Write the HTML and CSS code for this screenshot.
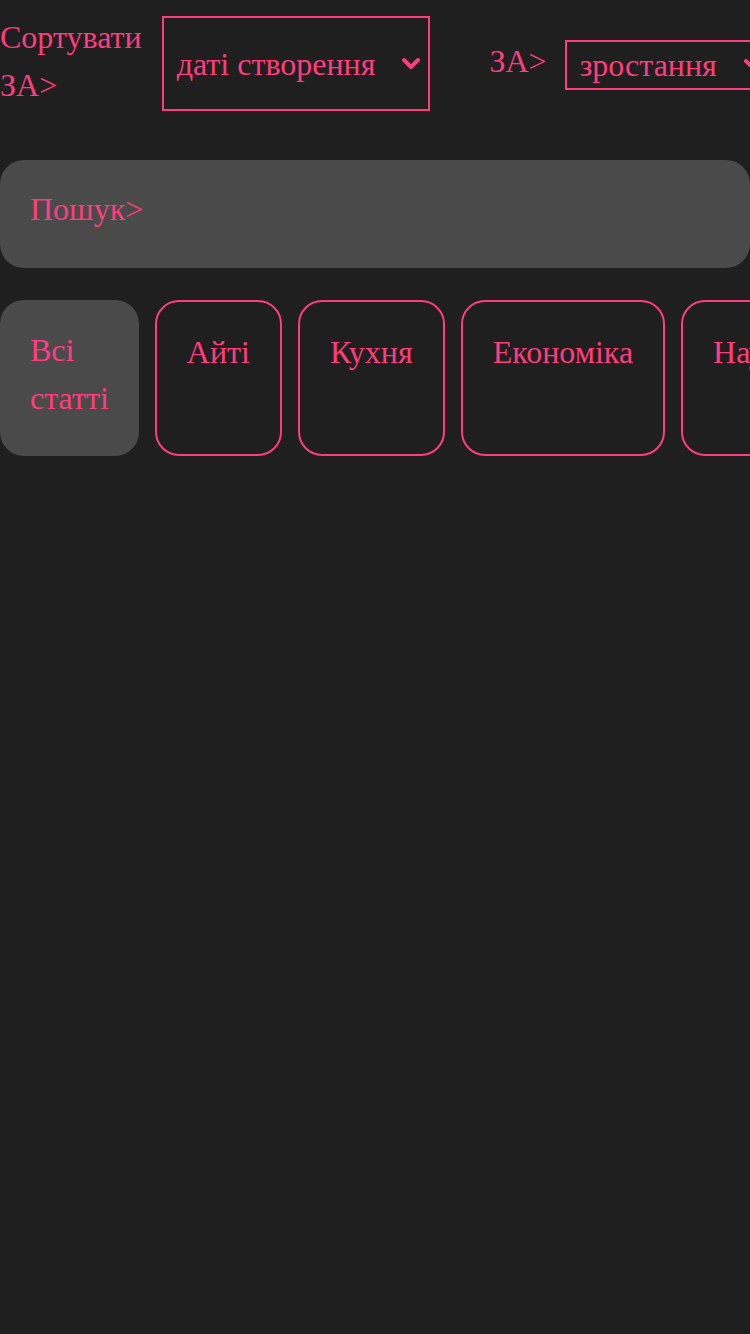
FILE: index.html
```html
<!DOCTYPE html>
<html lang="uk">
<head>
<meta charset="utf-8">
<title>Статті</title>
<link rel="stylesheet" href="styles.css">
</head>
<body>
<div class="page">
  <div class="toolbar">
    <div class="sort-group sort-group--first">
      <span class="sort-label">Сортувати ЗА&gt;</span>
      <div class="select select--tall">
        <span class="select-text">даті створення</span>
        <svg class="chevron" width="20" height="14" viewBox="0 0 20 14"><polyline points="3,3 10,10 17,3" fill="none" stroke="#ff3d7d" stroke-width="4" stroke-linecap="round" stroke-linejoin="round"/></svg>
      </div>
    </div>
    <div class="sort-group sort-group--second">
      <span class="sort-label">ЗА&gt;</span>
      <div class="select select--short">
        <span class="select-text">зростання</span>
        <svg class="chevron" width="20" height="14" viewBox="0 0 20 14"><polyline points="3,3 10,10 17,3" fill="none" stroke="#ff3d7d" stroke-width="4" stroke-linecap="round" stroke-linejoin="round"/></svg>
      </div>
    </div>
  </div>

  <div class="search">Пошук&gt;</div>

  <div class="categories">
    <div class="category category--active">Всі статті</div>
    <div class="category">Айті</div>
    <div class="category">Кухня</div>
    <div class="category">Економіка</div>
    <div class="category">Наука</div>
  </div>
</div>
</body>
</html>
```

FILE: styles.css
```css
html, body {
  margin: 0;
  padding: 0;
  background: #1f1f1f;
  overflow-x: hidden;
}

body {
  font-family: "Liberation Serif", "Times New Roman", serif;
  font-size: 32px;
  color: #ff3d7d;
}

.page {
  width: 750px;
  min-height: 1334px;
  overflow: hidden;
}

.toolbar {
  display: flex;
  align-items: center;
  padding-top: 16px;
  height: 111px;
  box-sizing: border-box;
  gap: 59px;
  white-space: nowrap;
}

.sort-group {
  display: flex;
  align-items: center;
  gap: 20px;
  flex-shrink: 0;
}

.sort-group--second {
  gap: 18px;
}

.sort-label {
  line-height: 40px;
}

.sort-group--first .sort-label {
  width: min-content;
  white-space: normal;
  line-height: 48px;
  margin-top: -6px;
}

.sort-group--second .sort-label {
  margin-bottom: 6px;
}

.select {
  display: flex;
  align-items: center;
  gap: 26px;
  border: 2px solid #ff3d7d;
  padding: 0 7px 0 13px;
  box-sizing: border-box;
  flex-shrink: 0;
}

.select--tall {
  height: 95px;
}

.select--short {
  height: 50px;
  margin-top: 3px;
}

.select-text {
  line-height: 40px;
}

.chevron {
  display: block;
  flex-shrink: 0;
}

.search {
  margin-top: 49px;
  height: 108px;
  box-sizing: border-box;
  background: #4a4a4a;
  border-radius: 24px;
  padding: 25px 30px 35px;
  line-height: 48px;
}

.categories {
  display: flex;
  gap: 16px;
  margin-top: 32px;
  white-space: nowrap;
}

.category {
  flex-shrink: 0;
  border: 2px solid #ff3d7d;
  border-radius: 24px;
  padding: 26px 30px 30px;
  line-height: 48px;
  text-align: center;
}

.category--active {
  border: none;
  background: #4a4a4a;
  padding: 26px 30px 34px;
  white-space: normal;
  width: min-content;
  text-align: left;
}
```
